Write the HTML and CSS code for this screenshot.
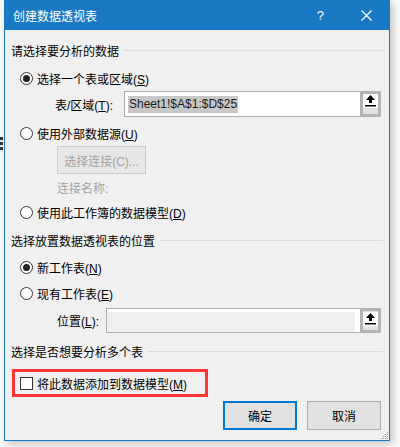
FILE: index.html
```html
<!DOCTYPE html>
<html lang="zh-CN">
<head>
<meta charset="utf-8">
<title>创建数据透视表</title>
<link rel="stylesheet" href="styles.css">
</head>
<body>
<div class="bgfrag"></div>
<div class="dialog">
  <div class="titlebar">
    <span class="title">创建数据透视表</span>
    <span class="help">?</span>
    <svg class="close" width="11" height="11" viewBox="0 0 11 11"><path d="M0.5 0.5 L10.5 10.5 M10.5 0.5 L0.5 10.5" stroke="#fff" stroke-width="1.2" fill="none"/></svg>
  </div>
  <div class="body">
    <div class="section s1"><span>请选择要分析的数据</span><i class="rule"></i></div>
    <div class="radio-row r-s"><span class="radio on"></span><span>选择一个表或区域(<u>S</u>)</span></div>
    <div class="field-row f-range">
      <span class="flabel">表/区域(<u>T</u>):</span>
      <div class="field">
        <div class="input"><span class="sel">Sheet1!$A$1:$D$25</span></div>
        <div class="pick"><span class="pickin"><svg width="11" height="12" viewBox="0 0 11 12"><path d="M5.5 0 L10 5 L7 5 L7 8 L4 8 L4 5 L1 5 Z" fill="#000"/><rect x="0" y="10" width="11" height="1.5" fill="#000"/></svg></span></div>
      </div>
    </div>
    <div class="radio-row r-u"><span class="radio"></span><span>使用外部数据源(<u>U</u>)</span></div>
    <div class="btn-row"><span class="dbtn">选择连接(C)...</span></div>
    <div class="conn">连接名称:</div>
    <div class="radio-row r-d"><span class="radio"></span><span>使用此工作簿的数据模型(<u>D</u>)</span></div>
    <div class="section s2"><span>选择放置数据透视表的位置</span><i class="rule"></i></div>
    <div class="radio-row r-n"><span class="radio on"></span><span>新工作表(<u>N</u>)</span></div>
    <div class="radio-row r-e"><span class="radio"></span><span>现有工作表(<u>E</u>)</span></div>
    <div class="field-row f-loc">
      <span class="flabel">位置(<u>L</u>):</span>
      <div class="field">
        <div class="input disabled"></div>
        <div class="pick"><span class="pickin"><svg width="11" height="12" viewBox="0 0 11 12"><path d="M5.5 0 L10 5 L7 5 L7 8 L4 8 L4 5 L1 5 Z" fill="#000"/><rect x="0" y="10" width="11" height="1.5" fill="#000"/></svg></span></div>
      </div>
    </div>
    <div class="section s3"><span>选择是否想要分析多个表</span><i class="rule"></i></div>
    <div class="highlight"><span class="check"></span><span>将此数据添加到数据模型(<u>M</u>)</span></div>
    <div class="actions">
      <span class="btn primary">确定</span>
      <span class="btn">取消</span>
    </div>
  </div>
  <svg class="grip" width="9" height="9" viewBox="0 0 9 9"><g fill="#9a9a9a"><rect x="7" y="1" width="1" height="1"/><rect x="5" y="3" width="1" height="1"/><rect x="7" y="3" width="1" height="1"/><rect x="3" y="5" width="1" height="1"/><rect x="5" y="5" width="1" height="1"/><rect x="7" y="5" width="1" height="1"/><rect x="1" y="7" width="1" height="1"/><rect x="3" y="7" width="1" height="1"/><rect x="5" y="7" width="1" height="1"/><rect x="7" y="7" width="1" height="1"/></g></svg>
</div>
</body>
</html>
```

FILE: styles.css
```css
html, body {
  margin: 0;
  padding: 0;
}
body {
  width: 400px;
  height: 447px;
  overflow: hidden;
  background: #fafafa;
  font-family: "Liberation Sans", "Noto Sans CJK SC", sans-serif;
  font-size: 12px;
  color: #000;
  position: relative;
}
.bgfrag {
  position: absolute;
  left: 0;
  top: 137px;
  width: 3px;
  height: 15px;
  background: repeating-linear-gradient(#333 0 3px, #eee 3px 5px);
}
.dialog {
  margin-left: 4px;
  width: 386px;
  height: 441px;
  box-sizing: border-box;
  border: 1px solid #1979c3;
  border-top: none;
  background: #f0f0f0;
  display: flex;
  flex-direction: column;
  position: relative;
  box-shadow: 3px 3px 8px rgba(0,0,0,0.22);
}
.titlebar {
  height: 30px;
  flex: none;
  background: #1979c3;
  color: #fff;
  display: flex;
  align-items: center;
  padding-left: 8px;
  margin: 0 -1px 0 -1px;
  padding-left: 9px;
}
.title {
  font-size: 12px;
  flex: 1;
}
.help {
  font-size: 13px;
  margin-right: 37px;
}
.close {
  margin-right: 18px;
}
.body {
  padding: 10px 0 0 6px;
  display: flex;
  flex-direction: column;
}
.section {
  height: 20px;
  display: flex;
  align-items: center;
  padding-right: 6px;
}
.section .rule {
  flex: 1;
  height: 1px;
  background: #dcdcdc;
  margin-left: 5px;
}
.s2 { margin-top: 8px; }
.s3 { margin-top: 8px; }
.radio-row {
  height: 20px;
  display: flex;
  align-items: center;
  padding-left: 9px;
  gap: 4px;
}
.r-s { margin-top: 8px; }
.r-u { margin-top: 6px; }
.r-d { margin-top: 3px; }
.r-n { margin-top: 7px; }
.r-e { margin-top: 6px; }
.radio {
  width: 13px;
  height: 13px;
  box-sizing: border-box;
  border: 1px solid #333;
  border-radius: 50%;
  background: #fff;
  display: flex;
  align-items: center;
  justify-content: center;
}
.radio.on::after {
  content: "";
  width: 7px;
  height: 7px;
  border-radius: 50%;
  background: #222;
}
.field-row {
  display: flex;
  align-items: center;
  padding-left: 44px;
}
.f-range { height: 26px; margin-top: 3px; }
.f-loc { height: 25px; margin-top: 5px; padding-left: 46px; }
.f-range .flabel { width: 69px; }
.f-loc .flabel { width: 49px; }
.field {
  display: flex;
  height: 100%;
  width: 257px;
}
.f-loc .field { width: 275px; }
.input {
  flex: 1;
  box-sizing: border-box;
  border: 1px solid #adadad;
  border-right: none;
  background: #fff;
  display: flex;
  align-items: center;
  padding-left: 3px;
}
.input.disabled {
  background: #f0f0f0;
  box-shadow: inset -5px 3px 0 #fff;
}
.sel {
  background: #c8c8c8;
  height: 17px;
  line-height: 17px;
  padding: 0 1px;
  color: #1a1a1a;
}
.pick {
  width: 21px;
  box-sizing: border-box;
  border: 3px solid #b4b4b4;
  background: #e3e3e3;
  display: flex;
  justify-content: center;
  padding-top: 0;
}
.pickin {
  width: 15px;
  height: 14px;
  background: #fff;
  display: flex;
  align-items: center;
  justify-content: center;
  margin-top: 0;
}
.f-loc .pickin { margin-top: 1px; }
.btn-row {
  margin-top: 3px;
  height: 28px;
  padding-left: 46px;
  display: flex;
}
.dbtn {
  width: 89px;
  box-sizing: border-box;
  border: 1px solid #cccccc;
  background: #e6e6e6;
  color: #a3a3a3;
  display: flex;
  align-items: center;
  justify-content: center;
}
.conn {
  margin-top: 5px;
  height: 20px;
  line-height: 20px;
  padding-left: 46px;
  color: #a3a3a3;
}
.highlight {
  margin-top: 8px;
  margin-left: 1px;
  width: 196px;
  height: 28px;
  box-sizing: border-box;
  border: 3px solid #ff3535;
  display: flex;
  align-items: center;
  padding-left: 5px;
  gap: 4px;
}
.check {
  width: 13px;
  height: 13px;
  box-sizing: border-box;
  border: 1px solid #333;
  background: #fff;
}
.actions {
  margin-top: 4px;
  display: flex;
  gap: 10px;
  padding-left: 212px;
}
.btn {
  width: 74px;
  height: 29px;
  box-sizing: border-box;
  border: 1px solid #adadad;
  background: #e1e1e1;
  display: flex;
  align-items: center;
  justify-content: center;
}
.btn.primary {
  border: 2px solid #0078d7;
}
.grip {
  position: absolute;
  right: 0;
  bottom: 0;
}
```
